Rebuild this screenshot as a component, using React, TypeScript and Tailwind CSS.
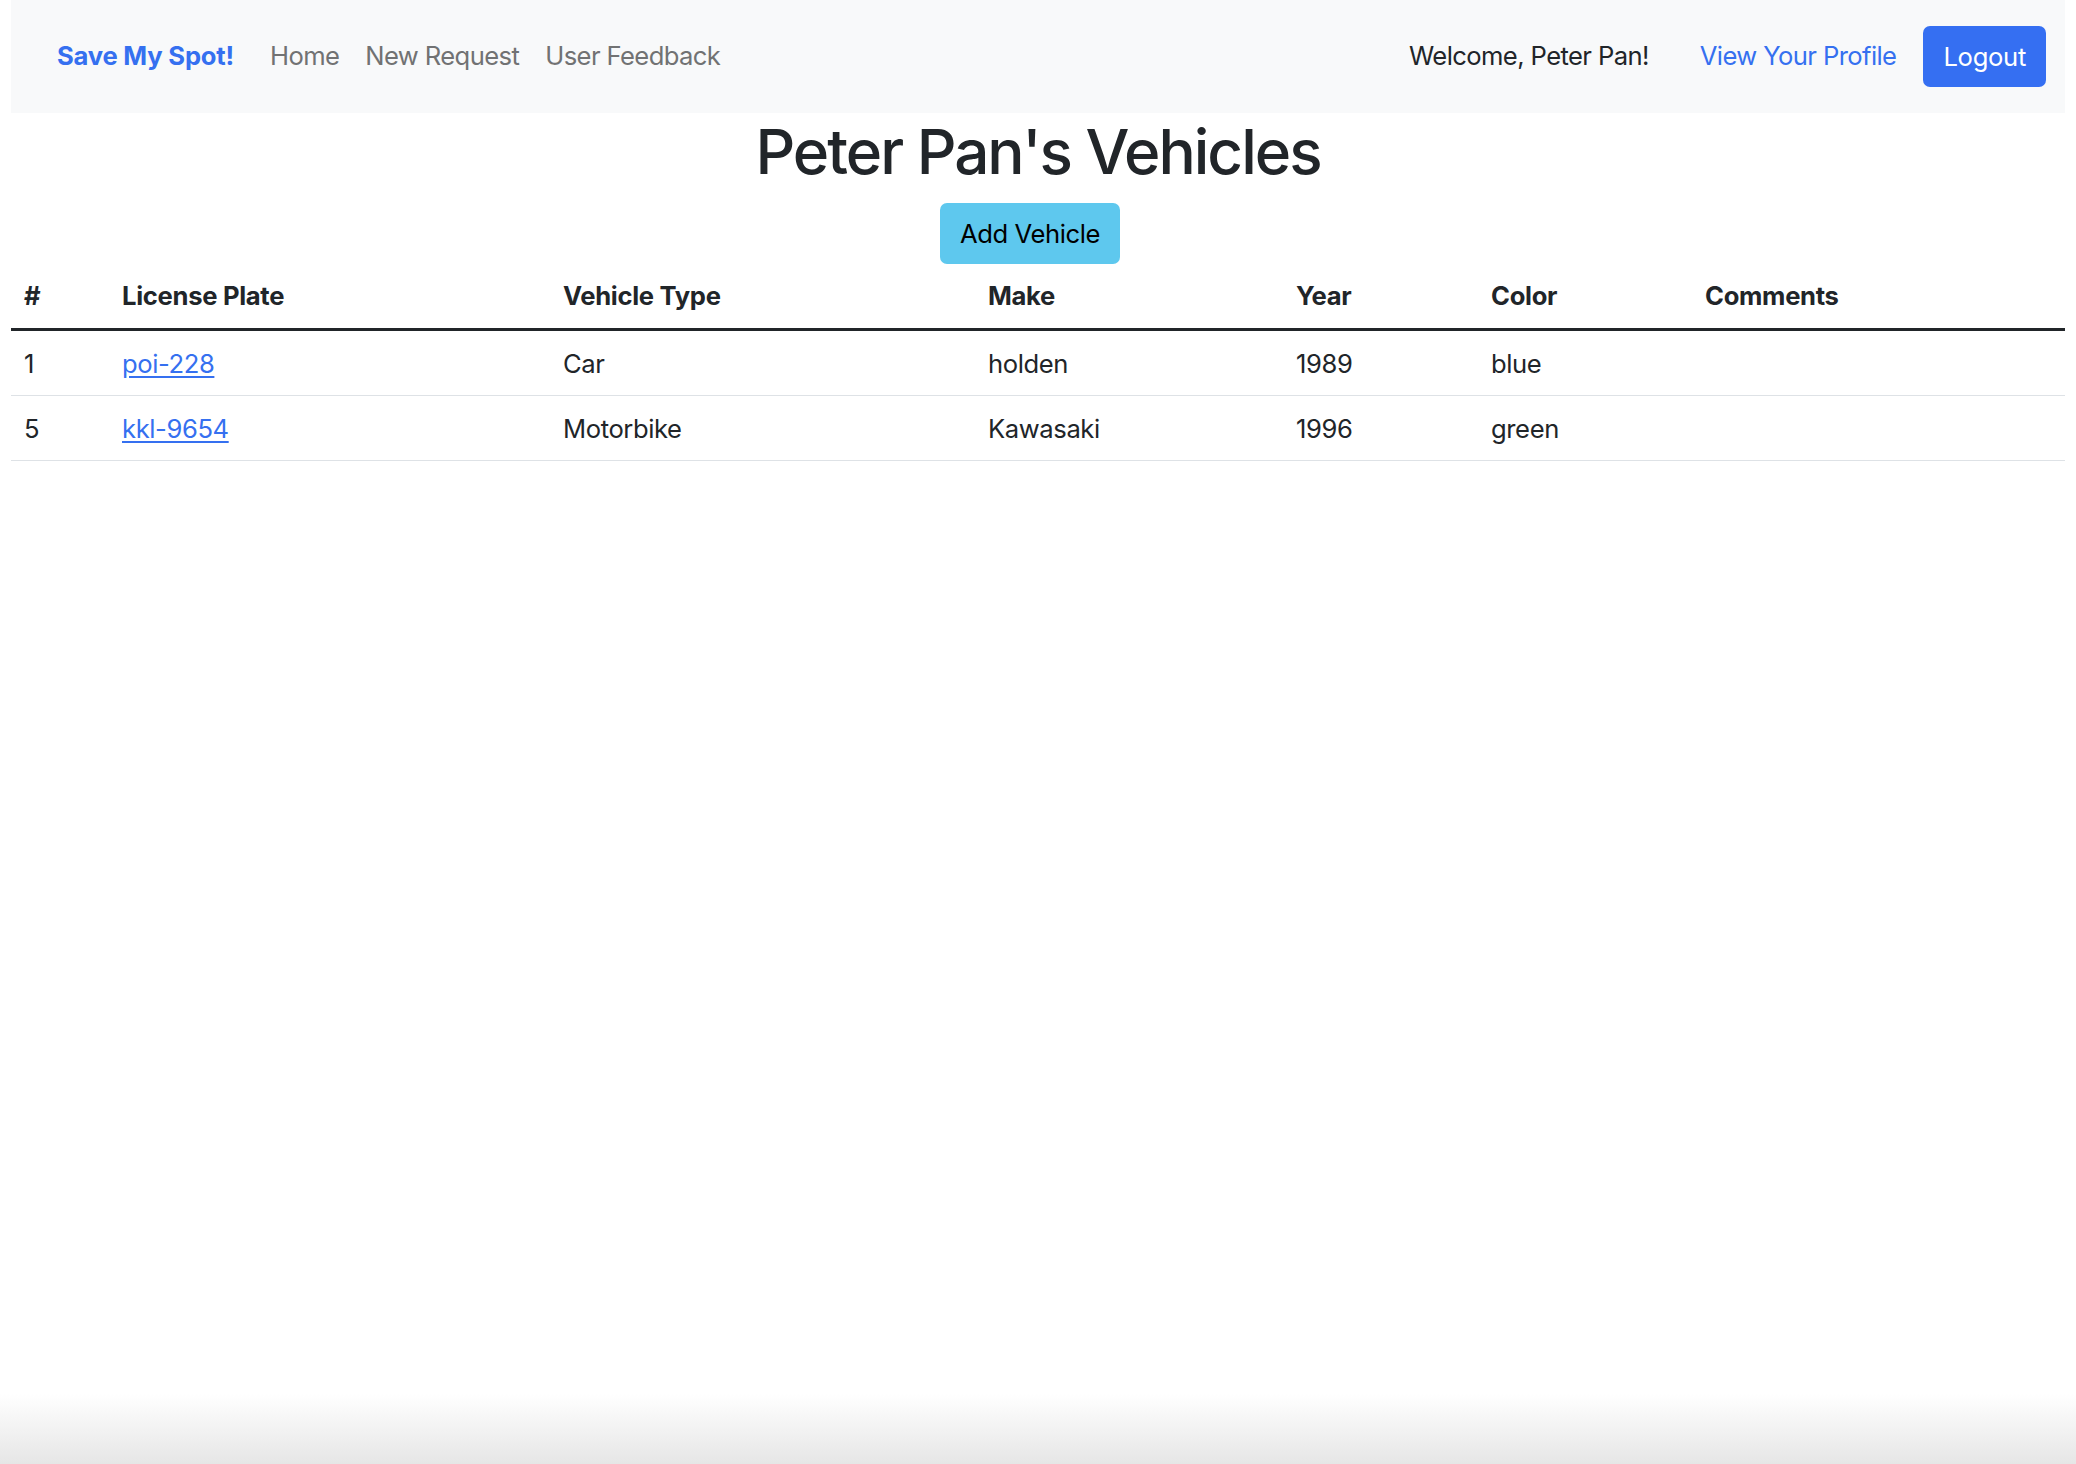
import React from "react";

const rows = [
  { id: "1", plate: "poi-228", type: "Car", make: "holden", year: "1989", color: "blue", comments: "" },
  { id: "5", plate: "kkl-9654", type: "Motorbike", make: "Kawasaki", year: "1996", color: "green", comments: "" },
];

export default function App() {
  return (
    <div
      className="min-h-screen flex flex-col bg-white text-[#212529]"
      style={{ fontFamily: 'Inter, "Noto Sans", "Liberation Sans", sans-serif' }}
    >
      <div className="mx-[11px]">
        <nav className="h-[113px] bg-[#f8f9fa] flex items-center pl-[46px] pr-[19px] text-[25.6px]">
          <a className="font-bold text-[#3570f0] mr-[36px] tracking-[-0.2px]">Save My Spot!</a>
          <div className="flex items-center gap-[26px] text-[#717273] tracking-[-0.6px]">
            <a>Home</a>
            <a>New Request</a>
            <a>User Feedback</a>
          </div>
          <div className="ml-auto flex items-center tracking-[-0.6px]">
            <span className="text-[#212529] mr-[51px]">Welcome, Peter Pan!</span>
            <a className="text-[#3570f0] mr-[27px]">View Your Profile</a>
            <button className="h-[61px] px-[20px] rounded-[7px] bg-[#356ff2] text-white text-[25.6px] leading-[38px] tracking-[-0.3px]">
              Logout
            </button>
          </div>
        </nav>

        <h1 className="text-center text-[62px] font-medium leading-[77px] mb-[13px] tracking-[-2px]">
          Peter Pan's Vehicles
        </h1>
        <div className="flex justify-center pr-[16px]">
          <button className="h-[61px] px-[20px] rounded-[7px] bg-[#5ec8ee] text-black text-[25.6px] leading-[38px] tracking-[-0.4px]">
            Add Vehicle
          </button>
        </div>

        <table className="w-full border-collapse text-[25.6px] leading-[38px] table-fixed">
          <colgroup>
            <col className="w-[98px]" />
            <col className="w-[441px]" />
            <col className="w-[425px]" />
            <col className="w-[308px]" />
            <col className="w-[195px]" />
            <col className="w-[214px]" />
            <col />
          </colgroup>
          <thead>
            <tr className="border-b-[3px] border-[#212529]">
              {["#", "License Plate", "Vehicle Type", "Make", "Year", "Color", "Comments"].map((h) => (
                <th key={h} className="text-left font-bold px-[13px] py-[13px] tracking-[-0.3px]">
                  {h}
                </th>
              ))}
            </tr>
          </thead>
          <tbody className="tracking-[-0.4px]">
            {rows.map((r) => (
              <tr key={r.id} className="border-b border-[#dee2e6]">
                <td className="px-[13px] pt-[14px] pb-[12px]">{r.id}</td>
                <td className="px-[13px] pt-[14px] pb-[12px]">
                  <a className="text-[#3570f0] underline underline-offset-[3px]">{r.plate}</a>
                </td>
                <td className="px-[13px] pt-[14px] pb-[12px]">{r.type}</td>
                <td className="px-[13px] pt-[14px] pb-[12px]">{r.make}</td>
                <td className="px-[13px] pt-[14px] pb-[12px]">{r.year}</td>
                <td className="px-[13px] pt-[14px] pb-[12px]">{r.color}</td>
                <td className="px-[13px] pt-[14px] pb-[12px]">{r.comments}</td>
              </tr>
            ))}
          </tbody>
        </table>
      </div>
      <div className="flex-1" />
      <div className="h-[70px] bg-gradient-to-b from-white to-[#e6e6e6]" />
    </div>
  );
}
